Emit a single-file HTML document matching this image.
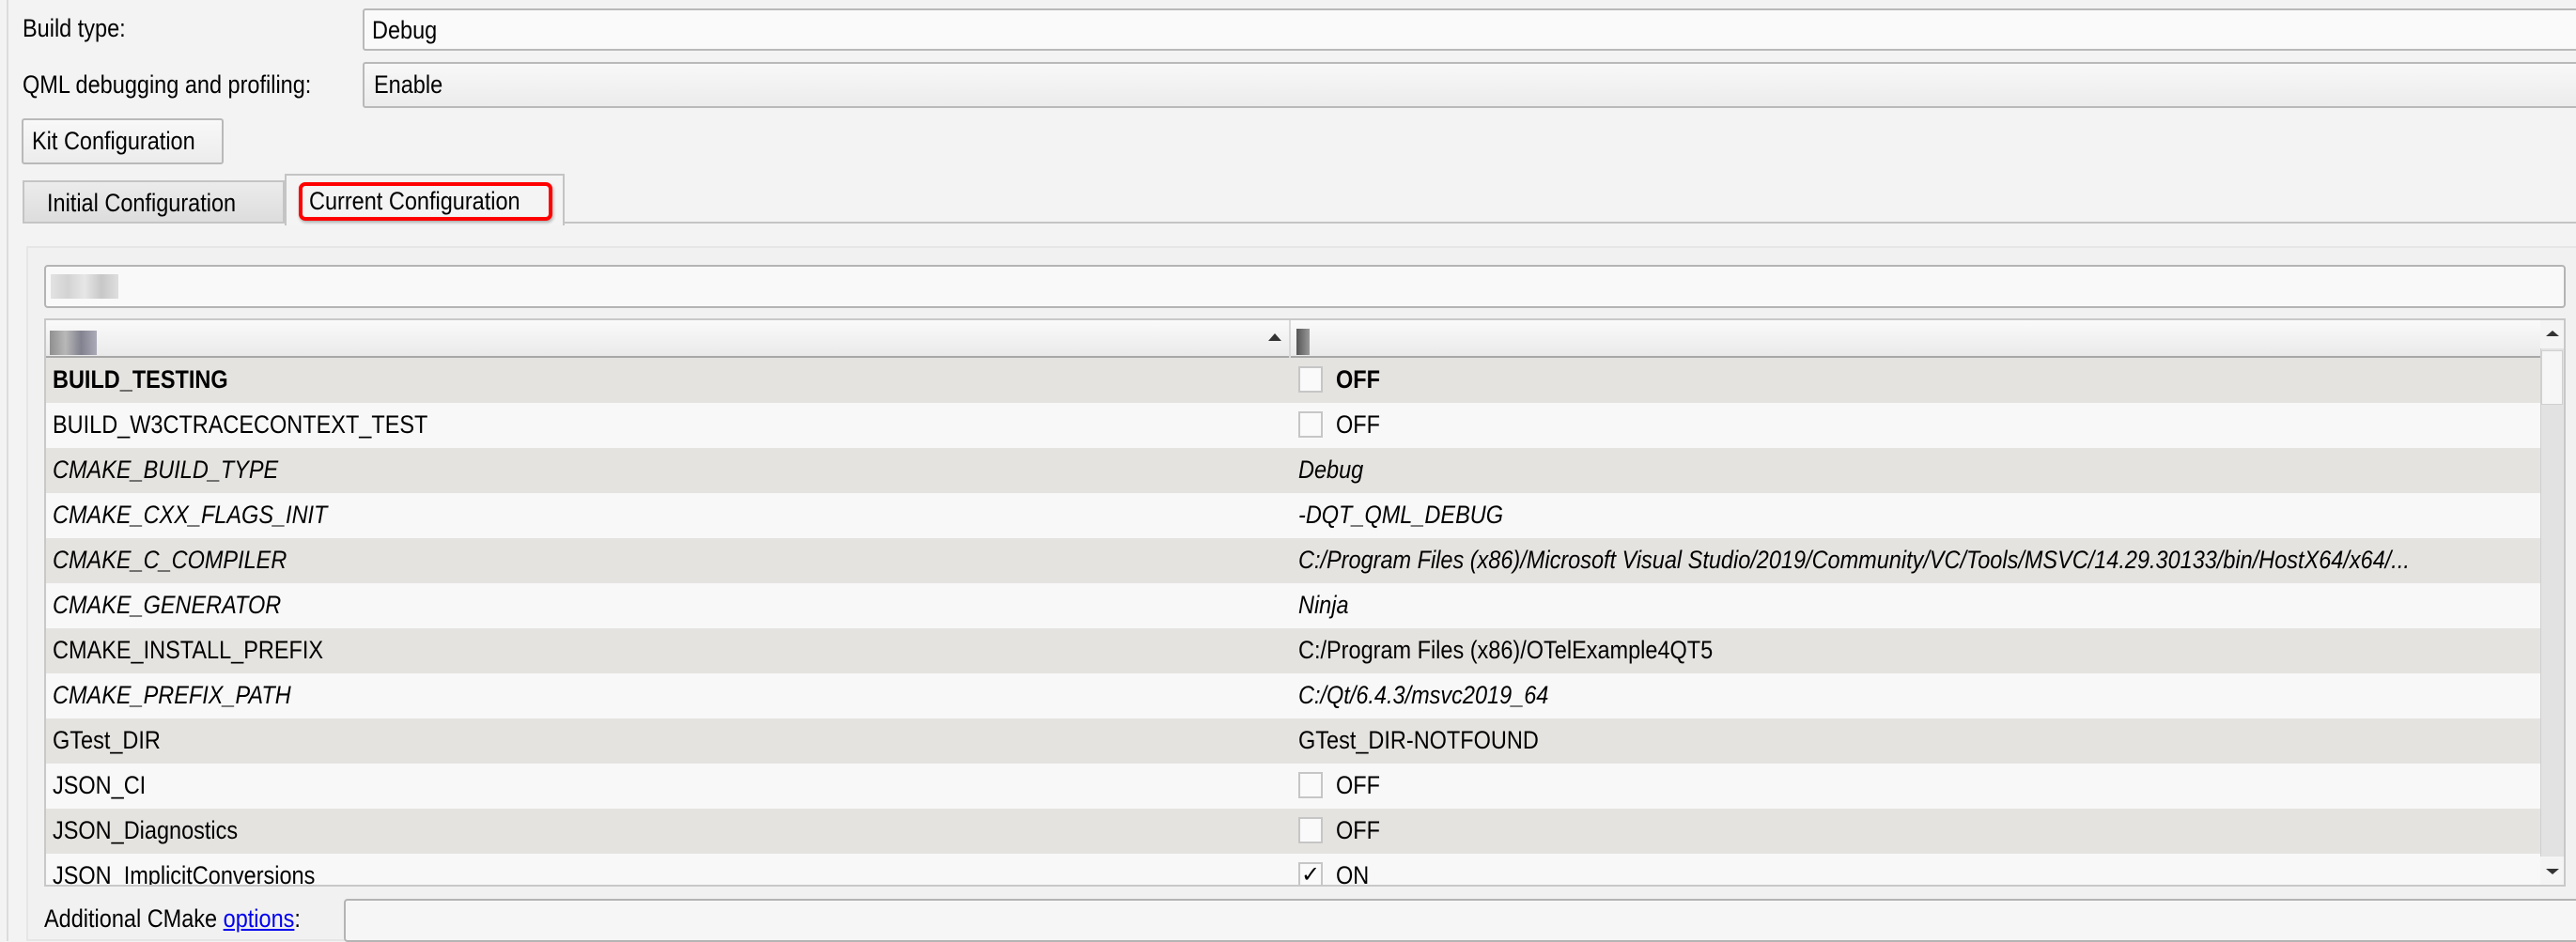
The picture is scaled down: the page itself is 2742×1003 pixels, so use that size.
<!DOCTYPE html>
<html><head><meta charset="utf-8"><style>
*{box-sizing:border-box;margin:0;padding:0}
body{width:2742px;height:1002px;background:#f3f3f3;position:relative;overflow:hidden;font-family:"Liberation Sans",sans-serif;font-size:27px;color:#000;white-space:nowrap}
.a{position:absolute}
.t{display:inline-block;transform:scaleX(.87);transform-origin:0 50%}
.lbl{position:absolute;line-height:32px}
.combo{position:absolute;border:2px solid #b9b9b9;border-radius:3px;background:linear-gradient(#f8f8f8,#ececec);padding-left:8px;line-height:42px}
.row{position:absolute;left:49px;width:2655px;height:48px;line-height:46px}
.row.g{background:#e5e3e0}.row.w{background:#f8f8f8}
.row .n{position:absolute;left:7px}
.row .v{position:absolute;left:1333px}
.cb{display:inline-block;width:26px;height:28px;border:2px solid #c6c6c6;background:#fafafa;vertical-align:middle;margin-right:14px;position:relative;top:-2px;text-align:center;line-height:24px;font-size:24px}
i{font-style:italic}
</style></head><body>
<div class="a" style="left:7px;top:0;width:2px;height:1002px;background:#dcdcdc"></div>
<div class="lbl" style="left:24px;top:14px"><span class="t">Build type:</span></div>
<div class="combo" style="left:386px;top:9px;width:2370px;height:45px;background:#fafafa"><span class="t">Debug</span></div>
<div class="lbl" style="left:24px;top:74px"><span class="t">QML debugging and profiling:</span></div>
<div class="combo" style="left:386px;top:66px;width:2370px;height:49px;padding-left:10px;line-height:45px"><span class="t">Enable</span></div>
<div class="combo" style="left:23px;top:126px;width:215px;height:49px;padding-left:9px;line-height:45px"><span class="t">Kit Configuration</span></div>
<div class="a" style="left:24px;top:192px;width:279px;height:46px;border:2px solid #c4c4c4;border-bottom:none;background:linear-gradient(#ececec,#dcdcdc);line-height:44px;padding-left:24px"><span class="t">Initial Configuration</span></div>
<div class="a" style="left:303px;top:185px;width:298px;height:55px;border:2px solid #c4c4c4;border-bottom:none;background:#f4f4f4"></div>
<div class="a" style="left:318px;top:194px;width:270px;height:41px;border:4px solid #f00;border-radius:7px;box-shadow:1px 2px 3px rgba(0,0,0,.3);line-height:33px;padding-left:7px"><span class="t">Current Configuration</span></div>
<div class="a" style="left:601px;top:236px;width:2141px;height:2px;background:#c4c4c4"></div>
<div class="a" style="left:24px;top:236px;width:279px;height:2px;background:#c4c4c4"></div>
<div class="a" style="left:28px;top:262px;width:2730px;height:740px;border:2px solid #e6e6e6;background:#f1f1f1"></div>
<div class="a" style="left:47px;top:282px;width:2684px;height:46px;border:2px solid #b4b4b4;border-radius:4px;background:#f9f9f9"></div>
<div class="a" style="left:54px;top:292px;width:72px;height:26px;background:linear-gradient(90deg,#ddd,#c9c9c9,#e2e2e2,#bbb,#d8d8d8);opacity:.8"></div>
<div class="a" style="left:47px;top:339px;width:2684px;height:605px;border:2px solid #c8c8c8;background:#f8f8f8"></div>
<div class="a" style="left:49px;top:341px;width:2655px;height:40px;background:linear-gradient(#fafafa,#eaeaea);border-bottom:2px solid #a8a8a8"></div>
<div class="a" style="left:53px;top:352px;width:50px;height:26px;background:linear-gradient(90deg,#777,#aaa,#667,#99a);opacity:.8"></div>
<div class="a" style="left:1372px;top:341px;width:2px;height:40px;background:#d8d8d8"></div>
<div class="a" style="left:1350px;top:355px;width:0;height:0;border-left:7px solid transparent;border-right:7px solid transparent;border-bottom:8px solid #333"></div>
<div class="a" style="left:1380px;top:350px;width:14px;height:28px;background:linear-gradient(90deg,#555,#999)"></div>
<div class="row g" style="top:381px"><span class="n"><b class="t">BUILD_TESTING</b></span><span class="v"><span class="cb"></span><b class="t">OFF</b></span></div>
<div class="row w" style="top:429px"><span class="n"><span class="t">BUILD_W3CTRACECONTEXT_TEST</span></span><span class="v"><span class="cb"></span><span class="t">OFF</span></span></div>
<div class="row g" style="top:477px"><span class="n"><i class="t">CMAKE_BUILD_TYPE</i></span><span class="v"><i class="t">Debug</i></span></div>
<div class="row w" style="top:525px"><span class="n"><i class="t">CMAKE_CXX_FLAGS_INIT</i></span><span class="v"><i class="t">-DQT_QML_DEBUG</i></span></div>
<div class="row g" style="top:573px"><span class="n"><i class="t">CMAKE_C_COMPILER</i></span><span class="v"><i class="t">C:/Program Files (x86)/Microsoft Visual Studio/2019/Community/VC/Tools/MSVC/14.29.30133/bin/HostX64/x64/...</i></span></div>
<div class="row w" style="top:621px"><span class="n"><i class="t">CMAKE_GENERATOR</i></span><span class="v"><i class="t">Ninja</i></span></div>
<div class="row g" style="top:669px"><span class="n"><span class="t">CMAKE_INSTALL_PREFIX</span></span><span class="v"><span class="t">C:/Program Files (x86)/OTelExample4QT5</span></span></div>
<div class="row w" style="top:717px"><span class="n"><i class="t">CMAKE_PREFIX_PATH</i></span><span class="v"><i class="t">C:/Qt/6.4.3/msvc2019_64</i></span></div>
<div class="row g" style="top:765px"><span class="n"><span class="t">GTest_DIR</span></span><span class="v"><span class="t">GTest_DIR-NOTFOUND</span></span></div>
<div class="row w" style="top:813px"><span class="n"><span class="t">JSON_CI</span></span><span class="v"><span class="cb"></span><span class="t">OFF</span></span></div>
<div class="row g" style="top:861px"><span class="n"><span class="t">JSON_Diagnostics</span></span><span class="v"><span class="cb"></span><span class="t">OFF</span></span></div>
<div class="row w" style="top:909px;height:33px;overflow:hidden"><span class="n"><span class="t">JSON_ImplicitConversions</span></span><span class="v"><span class="cb">✓</span><span class="t">ON</span></span></div>
<div class="a" style="left:2704px;top:341px;width:25px;height:601px;background:#e2e2e2;border-left:1px solid #cfcfcf"></div>
<div class="a" style="left:2704px;top:341px;width:25px;height:30px;background:#f4f4f4"></div>
<div class="a" style="left:2710px;top:352px;width:0;height:0;border-left:7px solid transparent;border-right:7px solid transparent;border-bottom:6px solid #333"></div>
<div class="a" style="left:2705px;top:373px;width:23px;height:58px;background:#f6f6f6;border:1px solid #d0d0d0"></div>
<div class="a" style="left:2704px;top:912px;width:25px;height:30px;background:#f4f4f4"></div>
<div class="a" style="left:2710px;top:925px;width:0;height:0;border-left:7px solid transparent;border-right:7px solid transparent;border-top:6px solid #333"></div>
<div class="lbl" style="left:47px;top:962px"><span class="t">Additional CMake <span style="color:#00e;text-decoration:underline">options</span>:</span></div>
<div class="a" style="left:366px;top:957px;width:2400px;height:46px;border:2px solid #b4b4b4;border-radius:4px;background:#f6f6f6"></div>
</body></html>
